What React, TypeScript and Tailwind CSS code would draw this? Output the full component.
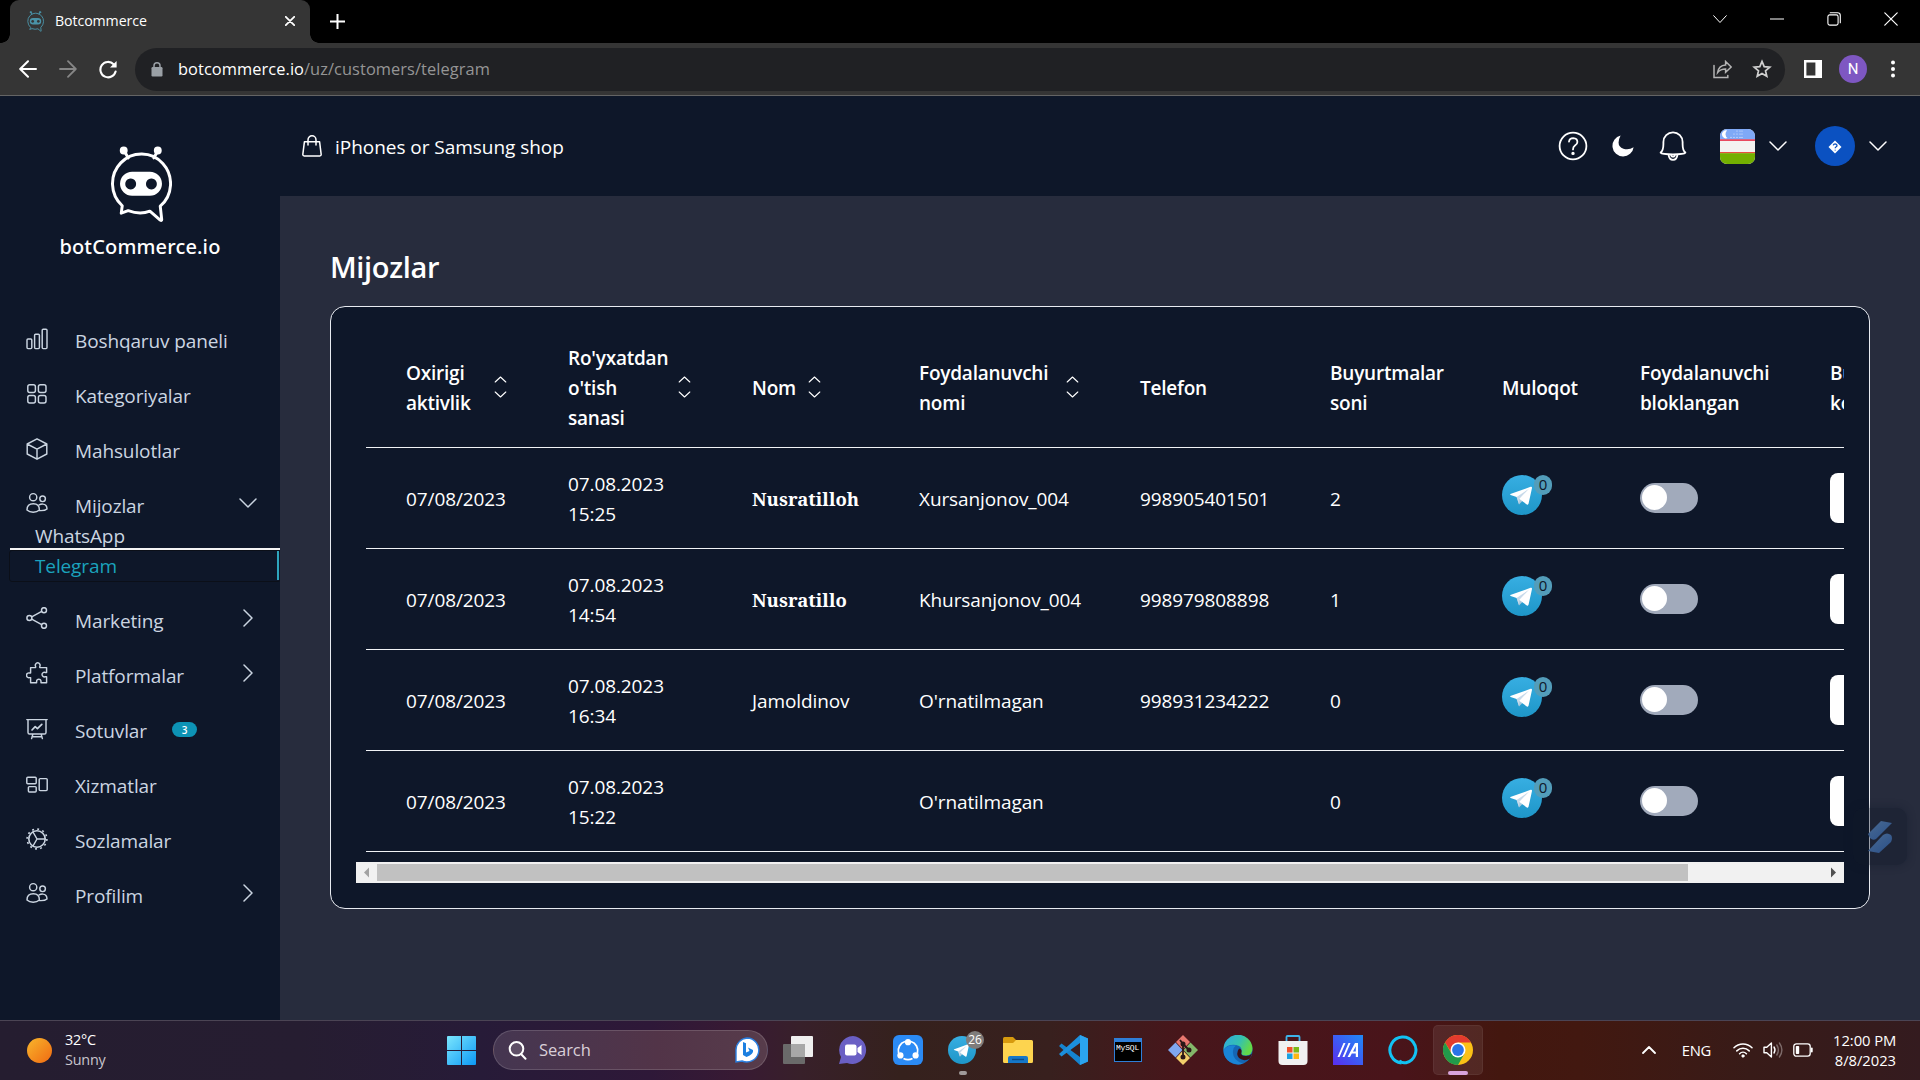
import type { ReactNode } from "react";

const line = {
  fill: "none",
  stroke: "currentColor",
  strokeLinecap: "round" as const,
  strokeLinejoin: "round" as const,
};

function Chevron({ dir, className }: { dir: "down" | "right" | "up"; className: string }) {
  const d = { down: "M1 5 L9 13 L17 5", right: "M5 1 L13 9 L5 17", up: "M1 13 L9 5 L17 13" }[dir];
  return (
    <svg viewBox="0 0 18 18" className={className} {...line} strokeWidth={1.5}>
      <path d={d} />
    </svg>
  );
}

function Robot({ className, sw }: { className: string; sw: number }) {
  return (
    <svg viewBox="0 0 62 78" className={className} {...line} strokeWidth={sw}>
      <path d="M18 12 L14 5 M44 12 L48 5" />
      <circle cx="13.5" cy="4.5" r="3.2" fill="currentColor" strokeWidth="1.6" />
      <circle cx="48" cy="4.5" r="3.2" fill="currentColor" strokeWidth="1.6" />
      <path d="M12 60.5 A29.4 30 0 1 1 50.5 61 L52 74.5 Q52 76 50.5 75 L40 66 Q30 70 18 65.5 L11 68 Z" />
      <path
        d="M22 26 H40 A12.2 12.2 0 0 1 40 50.5 H22 A12.2 12.2 0 0 1 22 26 Z M20.5 33 a5.5 5.5 0 1 0 .1 0 Z M41.5 33 a5.5 5.5 0 1 0 .1 0 Z"
        fill="currentColor"
        fillRule="evenodd"
        stroke="none"
      />
    </svg>
  );
}

function TabStrip() {
  return (
    <div className="flex h-[43px] bg-black pl-[10px] text-white">
      <div className="relative flex h-[43px] w-[300px] items-center rounded-t-[9px] bg-[#353535] pb-px pl-[17px] pr-[15px]">
        <span className="absolute -left-[9px] bottom-0 size-[9px] bg-[radial-gradient(circle_at_0_0,#000_8.5px,#353535_9px)]" />
        <span className="absolute -right-[9px] bottom-0 size-[9px] bg-[radial-gradient(circle_at_100%_0,#000_8.5px,#353535_9px)]" />
        <Robot className="h-[21px] w-[17px] text-[#4a93a8]" sw={3.5} />
        <span className="ml-[11px] flex-1 text-[14.2px] leading-5 tracking-[-0.1px]">Botcommerce</span>
        <svg viewBox="0 0 10 10" className="size-[10px]" {...line} strokeWidth={1.8}>
          <path d="M0.8 0.8 L9.2 9.2 M9.2 0.8 L0.8 9.2" />
        </svg>
      </div>
      <div className="flex flex-1 items-center pl-[20px]">
        <svg viewBox="0 0 15 15" className="size-[15px]" {...line} strokeWidth={2} strokeLinecap="butt">
          <path d="M7.5 0 V15 M0 7.5 H15" />
        </svg>
      </div>
      <div className="flex h-[37px] items-center gap-[43px] pr-[22px]">
        <svg viewBox="0 0 14 14" className="size-[14px]" {...line} strokeWidth={1}>
          <path d="M0.7 3.7 L7 10.5 L13.3 3.7" />
        </svg>
        <svg viewBox="0 0 14 14" className="size-[14px]" {...line} strokeWidth={1.2}>
          <path d="M0.5 7 H13.5" />
        </svg>
        <svg viewBox="0 0 14 14" className="size-[14px]" {...line} strokeWidth={1.1}>
          <rect x="0.9" y="2.9" width="10.2" height="10.2" rx="1.8" />
          <path d="M3.2 0.8 H10.5 Q13.3 0.8 13.3 3.4 V10.8" />
        </svg>
        <svg viewBox="0 0 14 14" className="size-[14px]" {...line} strokeWidth={1.2}>
          <path d="M0.8 0.8 L13.2 13.2 M13.2 0.8 L0.8 13.2" />
        </svg>
      </div>
    </div>
  );
}

function Toolbar() {
  return (
    <div className="flex h-[53px] items-center border-b border-[#646464] bg-[#353535] pl-[19px] text-white">
      <svg viewBox="0 0 18 18" className="size-[18px]" {...line} strokeWidth={2}>
        <path d="M17 9 H1.5 M9 1.2 L1.2 9 L9 16.8" />
      </svg>
      <svg viewBox="0 0 18 18" className="ml-[22px] size-[18px] text-[#868686]" {...line} strokeWidth={1.8}>
        <path d="M1 9 H16.5 M9 1.2 L16.8 9 L9 16.8" />
      </svg>
      <svg viewBox="0 0 18 19" className="ml-[22px] h-[19px] w-[18px]" {...line} strokeWidth={2.1}>
        <path d="M16.6 11.5 A7.7 7.7 0 1 1 14.6 4.2 L16 5.8" />
        <path d="M17.6 1 V7.6 H11 Z" fill="currentColor" stroke="none" />
      </svg>
      <div className="ml-[18px] flex h-[43px] w-[1650px] items-center rounded-full bg-[#202124] pl-[16px] pr-[11px]">
        <svg viewBox="0 0 12 15" className="h-[15px] w-[12px] text-[#9aa0a6]" fill="currentColor">
          <rect x="0.5" y="5" width="11" height="9.5" rx="1.2" />
          <path d="M3 6 V3.8 A3 3 0 0 1 9 3.8 V6" fill="none" stroke="currentColor" strokeWidth="1.5" />
        </svg>
        <span className="ml-[15px] mt-px flex-1 text-[16.4px] tracking-[0.07px] text-[#959595]">
          <span className="text-white">botcommerce.io</span>/uz/customers/telegram
        </span>
        <svg viewBox="0 0 19 19" className="size-[19px] text-[#b4b4b4]" {...line} strokeWidth={1.5} strokeLinejoin="miter">
          <path d="M1 5.5 V17.6 H14.8 V15.5" />
          <path d="M4.6 12.6 Q5.6 5.4 12.6 5 V1.5 L18.2 7 L12.6 12.3 V9 Q7.4 9 4.6 12.6 Z" />
        </svg>
        <svg viewBox="0 0 20 20" className="ml-[20px] mr-[2px] size-[20px] text-[#d0d0d0]" {...line} strokeWidth={1.7} strokeLinejoin="miter">
          <path d="M10 2.4 L12.2 7.6 L17.8 8.1 L13.5 11.8 L14.8 17.3 L10 14.4 L5.2 17.3 L6.5 11.8 L2.2 8.1 L7.8 7.6 Z" />
        </svg>
      </div>
      <svg viewBox="0 0 18 18" className="ml-[19px] size-[18px]">
        <path d="M0 0 H18 V18 H0 Z M2.4 2.4 V15.6 H11.4 V2.4 Z" fill="#fff" fillRule="evenodd" />
      </svg>
      <span className="ml-[17px] flex size-[28px] items-center justify-center rounded-full bg-[#7e57c2] font-['Roboto'] text-[15px]">N</span>
      <svg viewBox="0 0 4 18" className="ml-[24px] h-[18px] w-[4px]" fill="#fff">
        <circle cx="2" cy="2.6" r="2" />
        <circle cx="2" cy="9" r="2" />
        <circle cx="2" cy="15.4" r="2" />
      </svg>
    </div>
  );
}

const people = (
  <>
    <circle cx="7.2" cy="5.2" r="3.6" />
    <circle cx="16.6" cy="6.8" r="2.8" />
    <path d="M1 18 Q1 11.8 7.3 11.8 Q13.4 11.8 13.4 18 Q11 20.2 7.2 20.2 Q3.3 20.2 1 18 Z" />
    <path d="M13.2 12.9 Q14.8 12 16.8 12.1 Q21 12.3 21 17 Q19 18.9 13.5 18.6" />
  </>
);

const icons: Record<string, ReactNode> = {
  chart: (
    <>
      <rect x="1" y="11" width="4.8" height="9.6" rx="1" />
      <rect x="8.6" y="6.2" width="4.8" height="14.4" rx="1" />
      <rect x="16.2" y="1.2" width="4.8" height="19.4" rx="1" />
    </>
  ),
  grid: (
    <>
      <rect x="1.8" y="1.8" width="7.6" height="7.6" rx="2" />
      <rect x="12.4" y="1.8" width="7.6" height="7.6" rx="2" />
      <rect x="1.8" y="12.4" width="7.6" height="7.6" rx="2" />
      <rect x="12.4" y="12.4" width="7.6" height="7.6" rx="2" />
    </>
  ),
  box: <path d="M11 0.8 L20.8 6 V16 L11 21.2 L1.2 16 V6 Z M1.2 6 L11 11.2 L20.8 6 M11 11.2 V21.2" />,
  people,
  share: (
    <>
      <circle cx="3.4" cy="11" r="2.5" />
      <circle cx="18" cy="3.2" r="2.5" />
      <circle cx="18" cy="18.8" r="2.5" />
      <path d="M5.7 9.8 L15.7 4.4 M5.7 12.2 L15.7 17.6" />
    </>
  ),
  puzzle: (
    <path d="M4.6 5.6 H9.6 V4.4 A2.4 2.4 0 1 1 13.8 4.4 V5.6 H20.6 V10.4 H19 A2.3 2.3 0 1 0 19 14.8 H20.6 V20.8 H15 V19.4 A2.2 2.2 0 1 0 10.6 19.4 V20.8 H4.6 V15.6 H3.6 A2.4 2.4 0 1 1 3.6 11 H4.6 Z" />
  ),
  board: (
    <>
      <path d="M0.8 1.6 H21.2 M2 1.6 V14.4 Q2 16 3.6 16 H18.4 Q20 16 20 14.4 V1.6 M6.8 16.4 L5.6 20.6 M15.2 16.4 L16.4 20.6 M6 18.8 H16" />
      <path d="M6 12 L9.2 8.6 L11.4 10.6 L15.8 6.4" strokeWidth="1.7" />
    </>
  ),
  services: (
    <>
      <rect x="0.8" y="4.2" width="9.4" height="6.6" rx="1" />
      <rect x="2.4" y="13.6" width="7.8" height="5.4" rx="1" />
      <rect x="13.2" y="5.6" width="8" height="12" rx="1" />
    </>
  ),
  gear: (
    <>
      <circle cx="11" cy="11" r="8.2" strokeWidth="1.6" />
      <circle cx="11" cy="11" r="9.9" strokeWidth="1.6" strokeDasharray="1.9 3.28" strokeLinecap="butt" />
      <path d="M11 11 H19 M11 11 L7 4 M11 11 L7 18" />
    </>
  ),
};

const navTop = [
  { icon: "chart", label: "Boshqaruv paneli" },
  { icon: "grid", label: "Kategoriyalar" },
  { icon: "box", label: "Mahsulotlar" },
];
const navBottom: { icon: string; label: string; arrow?: boolean; badge?: string }[] = [
  { icon: "share", label: "Marketing", arrow: true },
  { icon: "puzzle", label: "Platformalar", arrow: true },
  { icon: "board", label: "Sotuvlar", badge: "3" },
  { icon: "services", label: "Xizmatlar" },
  { icon: "gear", label: "Sozlamalar" },
  { icon: "people", label: "Profilim", arrow: true },
];

function NavItem({ icon, label, arrow, badge, open }: { icon: string; label: string; arrow?: boolean; badge?: string; open?: boolean }) {
  return (
    <div className="flex h-[30px] items-center pl-[26px] pr-[23px]">
      <svg
        viewBox="0 0 22 22"
        className={arrow || open ? "mb-[7px] size-[22px] shrink-0" : "mb-[4px] size-[22px] shrink-0"}
        {...line}
        strokeWidth={1.45}
      >
        {icons[icon]}
      </svg>
      <span className="ml-[27px] whitespace-nowrap">{label}</span>
      {badge && (
        <span className="mb-[3px] ml-[25px] flex h-[15px] w-[25px] items-center justify-center rounded-full bg-[#0d93b5] text-[10px] font-semibold text-white">
          {badge}
        </span>
      )}
      {(arrow || open) && <Chevron dir={open ? "down" : "right"} className="mb-[7px] ml-auto size-[18px]" />}
    </div>
  );
}

function Sidebar() {
  return (
    <aside className="flex w-[280px] shrink-0 flex-col bg-[#0e1729] text-[19px] leading-[30px] tracking-[-0.12px] text-[#cbd5e1]">
      <div className="flex h-[230px] flex-col items-center pt-[50px] text-white">
        <Robot className="ml-[2px] h-[77px] w-[62px]" sw={3} />
        <div className="mt-[9px] font-['Noto_Sans'] text-[20px] font-medium tracking-[0.15px]">botCommerce.io</div>
      </div>
      <nav className="flex flex-col gap-[25px]">
        {navTop.map((n) => (
          <NavItem key={n.label} {...n} />
        ))}
        <div>
          <NavItem icon="people" label="Mijozlar" open />
          <div className="pl-[35px]">WhatsApp</div>
          <div className="relative ml-[10px] h-[30px] rounded-[2px] pl-[25px] text-[#1ba3bd] outline outline-[#0b0f18]">
            Telegram
            <span className="absolute -top-[3px] left-0 right-0 h-[2px] bg-[#f4f4f4]" />
            <span className="absolute bottom-px right-px top-0 w-[2px] bg-[#2ea5bd]" />
          </div>
        </div>
        {navBottom.map((n) => (
          <NavItem key={n.label} {...n} />
        ))}
      </nav>
    </aside>
  );
}

function Header() {
  return (
    <header className="flex h-[100px] shrink-0 items-center bg-[#0e1729] pl-[22px] pr-[33px] text-white">
      <svg viewBox="0 0 20 22" className="h-[22px] w-[20px]" {...line} strokeWidth={1.5}>
        <path d="M2.4 6.8 H17.6 L19.2 19.6 Q19.2 21 17.8 21 H2.2 Q0.8 21 0.8 19.6 Z" />
        <path d="M6 10 V5 A4 4.2 0 0 1 14 5 V10" />
      </svg>
      <span className="ml-[13px] mt-[2px] flex-1 text-[19px] tracking-[-0.04px]">iPhones or Samsung shop</span>
      <svg viewBox="0 0 30 30" className="size-[30px]" {...line} strokeWidth={1.8}>
        <circle cx="15" cy="15" r="13.4" />
        <path d="M11 10.6 Q11.6 7.2 15.2 7.2 Q19.4 7.4 19.4 11 Q19.4 13 17 14.6 Q15 16 15 18.4" />
        <circle cx="15" cy="22.4" r="0.8" fill="currentColor" />
      </svg>
      <svg viewBox="0 0 22 22" className="ml-[24px] size-[22px]" fill="currentColor">
        <path d="M8.6 0.6 Q3.4 10.6 11.4 13.8 Q17 15.4 21.6 12.2 A10.6 10.6 0 1 1 8.6 0.6 Z" />
      </svg>
      <svg viewBox="0 0 28 30" className="ml-[25px] h-[30px] w-[28px]" {...line} strokeWidth={1.8}>
        <path d="M1.6 21.6 Q4.4 19.6 4.4 13 V11 A9.6 9.6 0 0 1 23.6 11 V13 Q23.6 19.6 26.4 21.6 Q25 23.4 14 23.4 Q3 23.4 1.6 21.6 Z M9.6 23.6 Q10 28.8 14 28.8 Q18 28.8 18.4 23.6 M12 23.6 Q12.2 25.6 14 25.6 Q15.8 25.6 16 23.6" />
      </svg>
      <svg viewBox="0 0 35 35" className="ml-[33px] size-[35px] rounded-[7px]">
        <rect width="35" height="35" fill="#f4f3f1" />
        <rect width="35" height="10.5" fill="#7fa9f7" />
        <rect y="10.3" width="35" height="1.6" fill="#e8384f" />
        <rect y="23" width="35" height="1.4" fill="#e8503f" />
        <rect y="24.2" width="35" height="10.8" fill="#73af00" />
        <path d="M7.2 1.6 A4 4 0 1 0 7.6 9 A4.6 4.6 0 0 1 7.2 1.6 Z" fill="#fff" />
        <g fill="#dce8ff">
          {[
            [17, 2], [20, 2], [22, 2], [14, 5], [17, 5], [20, 5], [22, 5], [11, 8.4], [14, 8.4], [17, 8.4], [20, 8.4], [22, 8.4],
          ].map(([x, y]) => (
            <circle key={`${x}-${y}`} cx={x} cy={y} r="0.6" />
          ))}
        </g>
      </svg>
      <Chevron dir="down" className="ml-[14px] size-[18px]" />
      <span className="ml-[28px] flex size-[40px] items-center justify-center rounded-full bg-[#0b51c1]">
        <svg viewBox="0 0 14 14" className="mt-[2px] size-[14px]">
          <path d="M7 0.5 L13.5 7 L7 13.5 L0.5 7 Z" fill="#fff" />
          <path d="M5.2 5.4 Q5.6 3.8 7.2 3.8 Q9 4 9 5.4 Q9 6.4 7.9 7 Q7.2 7.4 7.2 8.2 M7.2 9.8 V10.6" fill="none" stroke="#0b51c1" strokeWidth="1.3" />
        </svg>
      </span>
      <Chevron dir="down" className="ml-[14px] size-[18px]" />
    </header>
  );
}

const columns = [
  { lines: ["Oxirigi", "aktivlik"], col: "w-[162px]", text: "w-[88px]", sort: true },
  { lines: ["Ro'yxatdan", "o'tish", "sanasi"], col: "w-[184px]", text: "w-[110px]", sort: true },
  { lines: ["Nom"], col: "w-[167px]", text: "w-[56px]", sort: true },
  { lines: ["Foydalanuvchi", "nomi"], col: "w-[221px]", text: "w-[147px]", sort: true },
  { lines: ["Telefon"], col: "w-[190px]", text: "" },
  { lines: ["Buyurtmalar", "soni"], col: "w-[172px]", text: "" },
  { lines: ["Muloqot"], col: "w-[138px]", text: "" },
  { lines: ["Foydalanuvchi", "bloklangan"], col: "w-[190px]", text: "" },
  { lines: ["Buyurtmalarni", "ko'rish"], col: "w-[200px]", text: "" },
];

const customers = [
  { time: "15:25", name: "Nusratilloh", serif: true, user: "Xursanjonov_004", phone: "998905401501", orders: "2" },
  { time: "14:54", name: "Nusratillo", serif: true, user: "Khursanjonov_004", phone: "998979808898", orders: "1" },
  { time: "16:34", name: "Jamoldinov", serif: false, user: "O'rnatilmagan", phone: "998931234222", orders: "0" },
  { time: "15:22", name: "", serif: false, user: "O'rnatilmagan", phone: "", orders: "0" },
];

function TelegramPlane({ id, className }: { id: string; className: string }) {
  return (
    <svg viewBox="0 0 40 40" className={className}>
      <defs>
        <linearGradient id={id} x1="0" y1="0" x2="0" y2="1">
          <stop offset="0" stopColor="#37aee2" />
          <stop offset="1" stopColor="#1e96c8" />
        </linearGradient>
      </defs>
      <circle cx="20" cy="20" r="20" fill={`url(#${id})`} />
      <path d="M14.6 22 L17 29.6 L20.4 26 Z" fill="#a9c9dd" />
      <path d="M14.6 22 L8.6 20 Q7.6 19.4 9 18.8 L28.6 11.8 Q30.2 11.4 30 13 L26.6 28.6 Q26.2 30.2 24.8 29.4 L18.6 25 Z" fill="#fff" />
      <path d="M14.6 22 L27 13.8 L17.6 23.4 L17 29 Z" fill="#c8daea" />
    </svg>
  );
}

function CustomerTable() {
  return (
    <table className="w-[1624px] table-fixed border-collapse text-[19px] leading-[30px] tracking-[-0.1px]">
      <thead>
        <tr className="h-[119px] border-b border-[#f1f3f6]">
          {columns.map((c, i) => (
            <th key={i} className={`${c.col} pl-[40px] pt-[2px] text-left font-semibold tracking-[-0.22px]`}>
              <div className="flex items-center">
                <div className={`${c.text} whitespace-nowrap`}>
                  {c.lines.map((l) => (
                    <div key={l}>{l}</div>
                  ))}
                </div>
                {c.sort && (
                  <svg viewBox="0 0 13 22" className="mb-[3px] h-[22px] w-[13px] shrink-0" {...line} strokeWidth={1.1}>
                    <path d="M1.2 6 L6.5 1 L11.8 6 M1.2 16 L6.5 21 L11.8 16" />
                  </svg>
                )}
              </div>
            </th>
          ))}
        </tr>
      </thead>
      <tbody>
        {customers.map((c) => (
          <tr key={c.time} className="h-[101px] border-b border-[#f1f3f6]">
            <td className="pl-[40px] pt-[2px]">07/08/2023</td>
            <td className="pl-[40px] pt-[2px]">
              07.08.2023
              <br />
              {c.time}
            </td>
            <td className="pl-[40px] pt-[2px]">
              {c.serif ? (
                <span className="font-['Noto_Serif','Liberation_Serif',serif] text-[18.5px] font-bold tracking-[0.02px]">{c.name}</span>
              ) : (
                c.name
              )}
            </td>
            <td className="pl-[40px] pt-[2px]">{c.user}</td>
            <td className="pl-[40px] pt-[2px]">{c.phone}</td>
            <td className="pl-[40px] pt-[2px]">{c.orders}</td>
            <td className="pl-[40px]">
              <div className="relative mb-[6px] size-[40px]">
                <TelegramPlane id={`tg-${c.time.replace(":", "")}`} className="size-[40px]" />
                <span className="absolute left-[32px] top-0 flex h-[20px] w-[18px] items-center justify-center rounded-full bg-[#539dba] text-[15px] leading-none text-[#0e1729]">
                  0
                </span>
              </div>
            </td>
            <td className="pl-[40px]">
              <div className="flex h-[30px] w-[58px] items-center rounded-full bg-[#a1aabb] pl-[2px]">
                <span className="size-[25px] rounded-full bg-white" />
              </div>
            </td>
            <td className="pl-[40px]">
              <div className="h-[50px] w-[120px] rounded-[8px] bg-white" />
            </td>
          </tr>
        ))}
      </tbody>
    </table>
  );
}

function Main() {
  return (
    <main className="relative flex-1 bg-[#272c3d] pl-[50px] pr-[50px] pt-[48px] text-white">
      <h1 className="h-[46px] text-[29px] font-semibold leading-[46px] tracking-[-0.35px]">Mijozlar</h1>
      <section className="mt-[16px] h-[603px] rounded-[15px] border border-[#e8ebf1] bg-[#0e1729] px-[25px] pt-[21px]">
        <div className="h-[534px] overflow-hidden pl-[10px]">
          <CustomerTable />
        </div>
        <div className="flex h-[21px] items-center bg-[#f1f1f1]">
          <svg viewBox="0 0 21 21" className="size-[21px]">
            <path d="M13 5.5 V15.5 L8 10.5 Z" fill="#a3a3a3" />
          </svg>
          <div className="h-[17px] w-[1311px] bg-[#c1c1c1]" />
          <svg viewBox="0 0 21 21" className="ml-auto size-[21px]">
            <path d="M8 5.5 V15.5 L13 10.5 Z" fill="#505050" />
          </svg>
        </div>
      </section>
      <div className="absolute right-[13px] top-[612px] flex h-[57px] w-[54px] items-center justify-center rounded-[10px] bg-[#0e1729]/35 shadow-[0_0_8px_rgba(14,23,41,0.4)]">
        <svg viewBox="0 0 26 34" className="h-[34px] w-[26px]">
          <defs>
            <linearGradient id="widget" x1="0" y1="0" x2="1" y2="1">
              <stop offset="0" stopColor="#4a6b93" />
              <stop offset="1" stopColor="#2a4f88" />
            </linearGradient>
          </defs>
          <path d="M14 1 L25 3 L9 19 Q6 21 3 18 L1 14 Z" fill="url(#widget)" />
          <path d="M12 33 L1 31 L16 15 Q20 12 24 15 Q26 18 24 22 Z" fill="url(#widget)" />
        </svg>
      </div>
    </main>
  );
}

function Slot({ children, active }: { children: ReactNode; active?: boolean }) {
  return (
    <div
      className={
        active
          ? "relative flex h-[50px] w-[50px] items-center justify-center rounded-[5px] border border-white/5 bg-white/8"
          : "relative flex h-[50px] w-[50px] items-center justify-center"
      }
    >
      {children}
    </div>
  );
}

function TaskIcons() {
  return (
    <div className="flex gap-[5px]">
      <Slot>
        <svg viewBox="0 0 30 30" className="size-[30px]">
          <rect x="8" y="1" width="22" height="21" rx="1" fill="#efefef" />
          <rect x="0" y="9" width="22" height="20" rx="1" fill="#6a6a6a" />
          <rect x="8" y="9" width="14" height="13" fill="#a8a8a8" />
        </svg>
      </Slot>
      <Slot>
        <svg viewBox="0 0 30 30" className="size-[30px]">
          <path d="M15 1 A14 14 0 1 1 9 28 L1 29 L3 22 A14 14 0 0 1 15 1 Z" fill="#6a5fc4" />
          <rect x="7" y="9.5" width="11.5" height="11" rx="2" fill="#fff" />
          <path d="M19.5 13 L23.5 10 V20 L19.5 17 Z" fill="#fff" />
        </svg>
      </Slot>
      <Slot>
        <svg viewBox="0 0 30 30" className="size-[30px]">
          <rect width="30" height="30" rx="6" fill="#2b8bf5" />
          <g fill="none" stroke="#fff" strokeWidth="1.8">
            <path d="M18 6.5 A9.5 9.5 0 0 1 24.4 18" />
            <path d="M19.500 23.500 A10 10 0 0 1 10.500 23.500" />
            <path d="M5.600 18 A9.500 9.500 0 0 1 12 6.500" />
          </g>
          <g fill="#fff">
            <circle cx="15" cy="7.2" r="3.1" />
            <circle cx="7.4" cy="20.4" r="3.1" />
            <circle cx="22.6" cy="20.4" r="3.1" />
          </g>
        </svg>
      </Slot>
      <Slot>
        <TelegramPlane id="tg-task" className="mr-[2px] size-[28px]" />
        <span className="absolute right-[4px] top-[6px] flex size-[18px] items-center justify-center rounded-full bg-[#7f7c7b] text-[12px] leading-none text-white">
          26
        </span>
        <span className="absolute bottom-0 h-[4px] w-[8px] rounded-full bg-[#a09a9a]" />
      </Slot>
      <Slot>
        <svg viewBox="0 0 30 30" className="size-[30px]">
          <path d="M0 3.5 Q0 2 1.5 2 H10 L13 5 V9 H0 Z" fill="#d79a0e" />
          <path d="M0 8 H10 L13 5 H28.5 Q30 5 30 6.5 V26.5 Q30 28 28.5 28 H1.5 Q0 28 0 26.5 Z" fill="#fdd44f" />
          <path d="M5 28 V23 Q5 21 7 21 H23 Q25 21 25 23 V28 Z" fill="#1577c9" />
          <path d="M9 24.5 H21" stroke="#0b4b86" strokeWidth="1.4" />
        </svg>
      </Slot>
      <Slot>
        <svg viewBox="0 0 30 30" className="size-[30px]">
          <path d="M22 0 L30 3.5 V26.5 L22 30 L1 11 L3.5 8.5 L22 22 Z" fill="#1584cf" />
          <path d="M22 0 V8 L3.5 21.5 L1 19 Z" fill="#1c8fdc" />
          <path d="M22 0 L30 3.5 V26.5 L22 30 Z" fill="#2ba4ee" />
        </svg>
      </Slot>
      <Slot>
        <div className="flex h-[24px] w-[28px] flex-col bg-[#2f7fd8] p-px pt-[4px]">
          <div className="flex-1 bg-black pl-px pt-px font-['Liberation_Mono'] text-[8px] leading-[9px] tracking-[-0.2px] text-white">MySQL</div>
        </div>
      </Slot>
      <Slot>
        <svg viewBox="0 0 30 30" className="size-[30px]">
          <path d="M15 0 L22 7 L15 14.5 L8 7 Z" fill="#e8776f" />
          <path d="M7.5 7.5 L14.5 15 L7.5 22.5 L0 15 Z" fill="#7fa7f0" />
          <path d="M22.5 7.5 L30 15 L22.5 22.5 L15.5 15 Z" fill="#84b86a" />
          <path d="M15 15.5 L22 23 L15 30 L8 23 Z" fill="#f3cf6b" />
          <g stroke="#2b1718" strokeWidth="1.8" fill="#2b1718">
            <path d="M12 5 L15 9 V23 M15 9 L21 15" fill="none" />
            <circle cx="15" cy="9" r="1.6" />
            <circle cx="21" cy="15" r="1.6" />
            <circle cx="15" cy="22" r="1.6" />
          </g>
        </svg>
      </Slot>
      <Slot>
        <svg viewBox="0 0 30 30" className="size-[30px]">
          <defs>
            <linearGradient id="edge-a" x1="0" y1="0" x2="1" y2="0.4">
              <stop offset="0" stopColor="#2fa8e0" />
              <stop offset="0.6" stopColor="#35c1b0" />
              <stop offset="1" stopColor="#62d949" />
            </linearGradient>
          </defs>
          <circle cx="15" cy="15" r="14.5" fill="#1566b4" />
          <path d="M0.5 15 A14.5 14.5 0 0 1 29.5 13.5 Q29.5 20 23 20.5 Q17.5 20.5 18.5 17 Q19.5 11 13 10 Q4 9 0.5 15 Z" fill="url(#edge-a)" />
          <path d="M18.5 17 Q17 21 23 21 Q26.5 21 29 18.5 L27 23.5 Q21 27 16 23 Q12.5 19 16 13.5 Q19 14 18.5 17 Z" fill="#3b1216" />
          <path d="M10 16 Q9 25 20 28.5 Q14 31 7 27 Q0 22 0.5 15 Q5 9 13 10.5 Q10.500 12 10 16 Z" fill="#1a84d6" />
        </svg>
      </Slot>
      <Slot>
        <svg viewBox="0 0 30 30" className="size-[30px]">
          <path d="M8.5 7 V2 Q8.5 1 9.5 1 H20.5 Q21.5 1 21.5 2 V7" fill="none" stroke="#3db4ea" strokeWidth="1.8" />
          <path d="M0.5 6 H29.5 V26 Q29.5 30 25.5 30 H4.5 Q0.5 30 0.5 26 Z" fill="#f1f1f1" />
          <rect x="9" y="12" width="5.5" height="5.5" fill="#f0502a" />
          <rect x="15.5" y="12" width="5.5" height="5.5" fill="#7cb918" />
          <rect x="9" y="18.5" width="5.5" height="5.5" fill="#1ba1e2" />
          <rect x="15.5" y="18.5" width="5.5" height="5.5" fill="#fcb714" />
        </svg>
      </Slot>
      <Slot>
        <svg viewBox="0 0 30 30" className="size-[30px]">
          <defs>
            <linearGradient id="ma" x1="0" y1="1" x2="1" y2="0">
              <stop offset="0" stopColor="#5a2df0" />
              <stop offset="1" stopColor="#1f8bf5" />
            </linearGradient>
          </defs>
          <rect width="30" height="30" fill="url(#ma)" />
          <path d="M4.5 22 L10.5 8 H12.5 L6.5 22 Z M9.500 22 L15.500 8 H17.500 L11.500 22 Z M14.500 22 L22 8 H25 V22 H22.800 V18.500 H18.800 L17 22 Z M20 16.400 H22.800 V11.200 Z" fill="#fff" fillRule="evenodd" />
        </svg>
      </Slot>
      <Slot>
        <svg viewBox="0 0 30 30" className="size-[30px]">
          <path d="M13.5 28 A13 13 0 1 1 18 27.7 Q13.5 28.5 11.5 25.5" fill="none" stroke="#12c2f3" strokeWidth="3" />
        </svg>
      </Slot>
      <Slot active>
        <svg viewBox="0 0 30 30" className="size-[30px]">
          <circle cx="15" cy="15" r="15" fill="#fbc116" />
          <path d="M2 7.5 A15 15 0 0 1 28 7.5 H15 L9 18.5 Z" fill="#e33b2e" />
          <path d="M2 7.5 A15 15 0 0 0 15 30 L21.5 18.5 H8.5 Z" fill="#229a4b" />
          <circle cx="15" cy="15" r="7.5" fill="#fff" />
          <circle cx="15" cy="15" r="5.9" fill="#2a74e8" />
        </svg>
        <span className="absolute -bottom-px h-[4px] w-[20px] rounded-full bg-[#d9a3dc]" />
      </Slot>
    </div>
  );
}

function Taskbar() {
  return (
    <footer className="flex h-[60px] items-center border-t border-[#4b4454] bg-[linear-gradient(90deg,#251d30_0px,#261d31_300px,#271b38_480px,#2e1838_650px,#381a33_740px,#38202a_800px,#35211d_900px,#38201e_1050px,#47161b_1180px,#49141a_1400px,#43170f_1500px,#421810_1580px,#381b18_1750px,#341b1f_1920px)] pb-px pl-[27px] pr-[24px] text-white">
      <span className="size-[25px] rounded-full bg-[linear-gradient(135deg,#f8b62c,#f06a12)]" />
      <div className="ml-[13px] w-[370px] text-[14.4px] leading-[20px] tracking-[-0.2px]">
        <div>32°C</div>
        <div className="text-[#c9c5cd]">Sunny</div>
      </div>
      <svg viewBox="0 0 29 29" className="mx-[12px] size-[29px]">
        <defs>
          <linearGradient id="win" x1="0" y1="0" x2="1" y2="1">
            <stop offset="0" stopColor="#7be6fd" />
            <stop offset="1" stopColor="#0c98f5" />
          </linearGradient>
        </defs>
        <path d="M0 1 Q0 0 1 0 H14 V14 H0 Z M15 0 H28 Q29 0 29 1 V14 H15 Z M0 15 H14 V29 H1 Q0 29 0 28 Z M15 15 H29 V28 Q29 29 28 29 H15 Z" fill="url(#win)" />
      </svg>
      <div className="ml-[5px] flex h-[40px] w-[275px] items-center rounded-full border border-white/15 bg-[linear-gradient(90deg,#453651,#523448_60%,#573c4b)] pl-[14px] pr-[7px]">
        <svg viewBox="0 0 19 19" className="size-[19px]" {...line} strokeWidth={2}>
          <circle cx="8.5" cy="7.8" r="6.8" fill="#ffffff22" />
          <path d="M13 13 L17.5 17.8" />
        </svg>
        <span className="ml-[12px] mt-px flex-1 text-[16.5px] tracking-[-0.1px] text-[#d9cfd8]">Search</span>
        <svg viewBox="0 0 26 26" className="size-[26px]">
          <path d="M13 1 A12 12 0 1 1 8 24 L2 25 V13 A12 12 0 0 1 13 1 Z" fill="#fff" stroke="#2a7fe0" strokeWidth="1.4" />
          <path d="M9 5 L12 6.2 V15.5 L15.5 14 L14 10.5 L19 13 Q20 17 12.5 20 L9 18 Z" fill="#1c7fe0" />
        </svg>
      </div>
      <div className="ml-[5px]">
        <TaskIcons />
      </div>
      <div className="ml-auto flex items-center">
        <svg viewBox="0 0 14 8" className="h-[8px] w-[14px]" {...line} strokeWidth={1.8}>
          <path d="M1 7 L7 1 L13 7" />
        </svg>
        <span className="ml-[26px] text-[14.8px] tracking-[-0.3px]">ENG</span>
        <svg viewBox="0 0 20 16" className="ml-[22px] h-[16px] w-[20px]" {...line} strokeWidth={1.5}>
          <path d="M1 5.8 A12.5 12.5 0 0 1 19 5.8 M3.8 8.9 A8.8 8.8 0 0 1 16.2 8.9 M6.6 11.7 A4.9 4.9 0 0 1 13.4 11.7" />
          <circle cx="10" cy="14" r="1.2" fill="currentColor" strokeWidth="0.8" />
        </svg>
        <svg viewBox="0 0 20 18" className="ml-[10px] h-[18px] w-[20px]" {...line} strokeWidth={1.4}>
          <path d="M1 6.2 H3.8 L8.4 2 V16 L3.8 11.8 H1 Z M11 6 Q13 9 11 12" />
          <path d="M13.8 4 Q17 9 13.8 14 M16.4 2 Q21.4 9 16.4 16" opacity="0.35" />
        </svg>
        <svg viewBox="0 0 20 14" className="ml-[10px] h-[14px] w-[20px]" {...line} strokeWidth={1.3}>
          <rect x="0.8" y="0.8" width="16.4" height="12.4" rx="2.6" />
          <rect x="2.8" y="3" width="3.4" height="8" rx="0.8" fill="currentColor" stroke="none" />
          <path d="M18.8 5.5 V8.5" strokeWidth="1.8" />
        </svg>
        <div className="ml-[20px] w-[63px] whitespace-nowrap text-right text-[14.8px] leading-[20px] tracking-[-0.05px]">
          <div>12:00 PM</div>
          <div>8/8/2023</div>
        </div>
      </div>
    </footer>
  );
}

export default function App() {
  return (
    <div className="flex h-[1080px] w-[1920px] flex-col overflow-hidden font-['Open_Sans','Noto_Sans',sans-serif]">
      <TabStrip />
      <Toolbar />
      <div className="flex h-[924px]">
        <Sidebar />
        <div className="flex w-[1640px] min-w-0 flex-col">
          <Header />
          <Main />
        </div>
      </div>
      <Taskbar />
    </div>
  );
}
